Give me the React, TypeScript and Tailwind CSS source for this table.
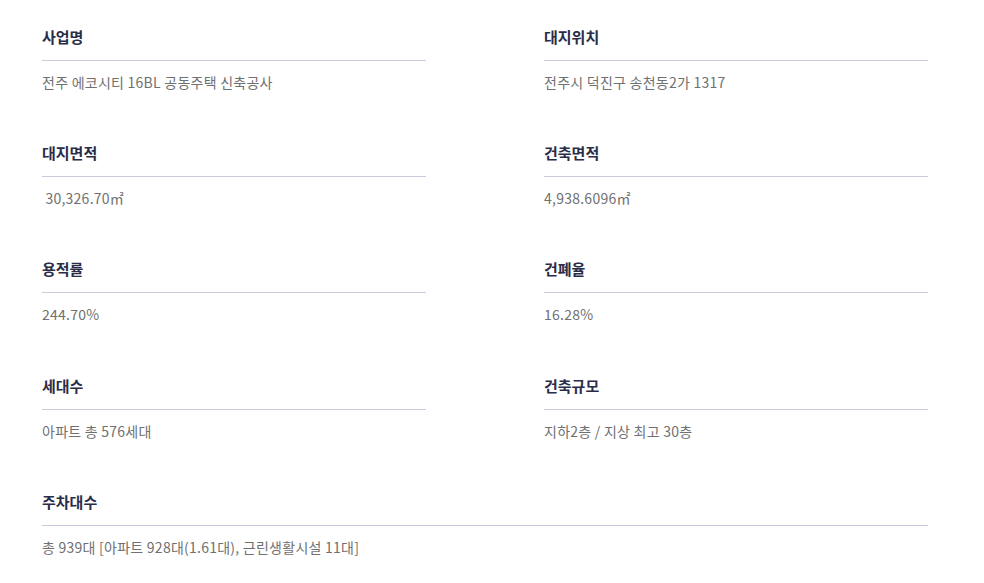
import React from "react";

const items: { t: string; v: string; full?: boolean }[] = [
  { t: "사업명", v: "전주 에코시티 16BL 공동주택 신축공사" },
  { t: "대지위치", v: "전주시 덕진구 송천동2가 1317" },
  { t: "대지면적", v: " 30,326.70㎡" },
  { t: "건축면적", v: "4,938.6096㎡" },
  { t: "용적률", v: "244.70%" },
  { t: "건폐율", v: "16.28%" },
  { t: "세대수", v: "아파트 총 576세대" },
  { t: "건축규모", v: "지하2층 / 지상 최고 30층" },
  { t: "주차대수", v: "총 939대 [아파트 928대(1.61대), 근린생활시설 11대]", full: true },
];

export default function App() {
  return (
    <div
      className="w-[984px] h-[583px] bg-white overflow-hidden"
      style={{ fontFamily: '"Noto Sans CJK KR", "Noto Sans", sans-serif' }}
    >
      <div className="ml-[42px] w-[886px] pt-[26px] grid grid-cols-2 gap-x-[118px] gap-y-[50.2px]">
        {items.map((it) => (
          <div key={it.t} className={it.full ? "col-span-2" : ""}>
            <div className="text-[15px] leading-[22px] font-bold text-[#2a2d48] pb-[12px] border-b border-[#cbcbdf]">
              {it.t}
            </div>
            <div className="mt-[11px] text-[14px] leading-[20px] tracking-[0.25px] text-[#707070] whitespace-pre">
              {it.v}
            </div>
          </div>
        ))}
      </div>
    </div>
  );
}
